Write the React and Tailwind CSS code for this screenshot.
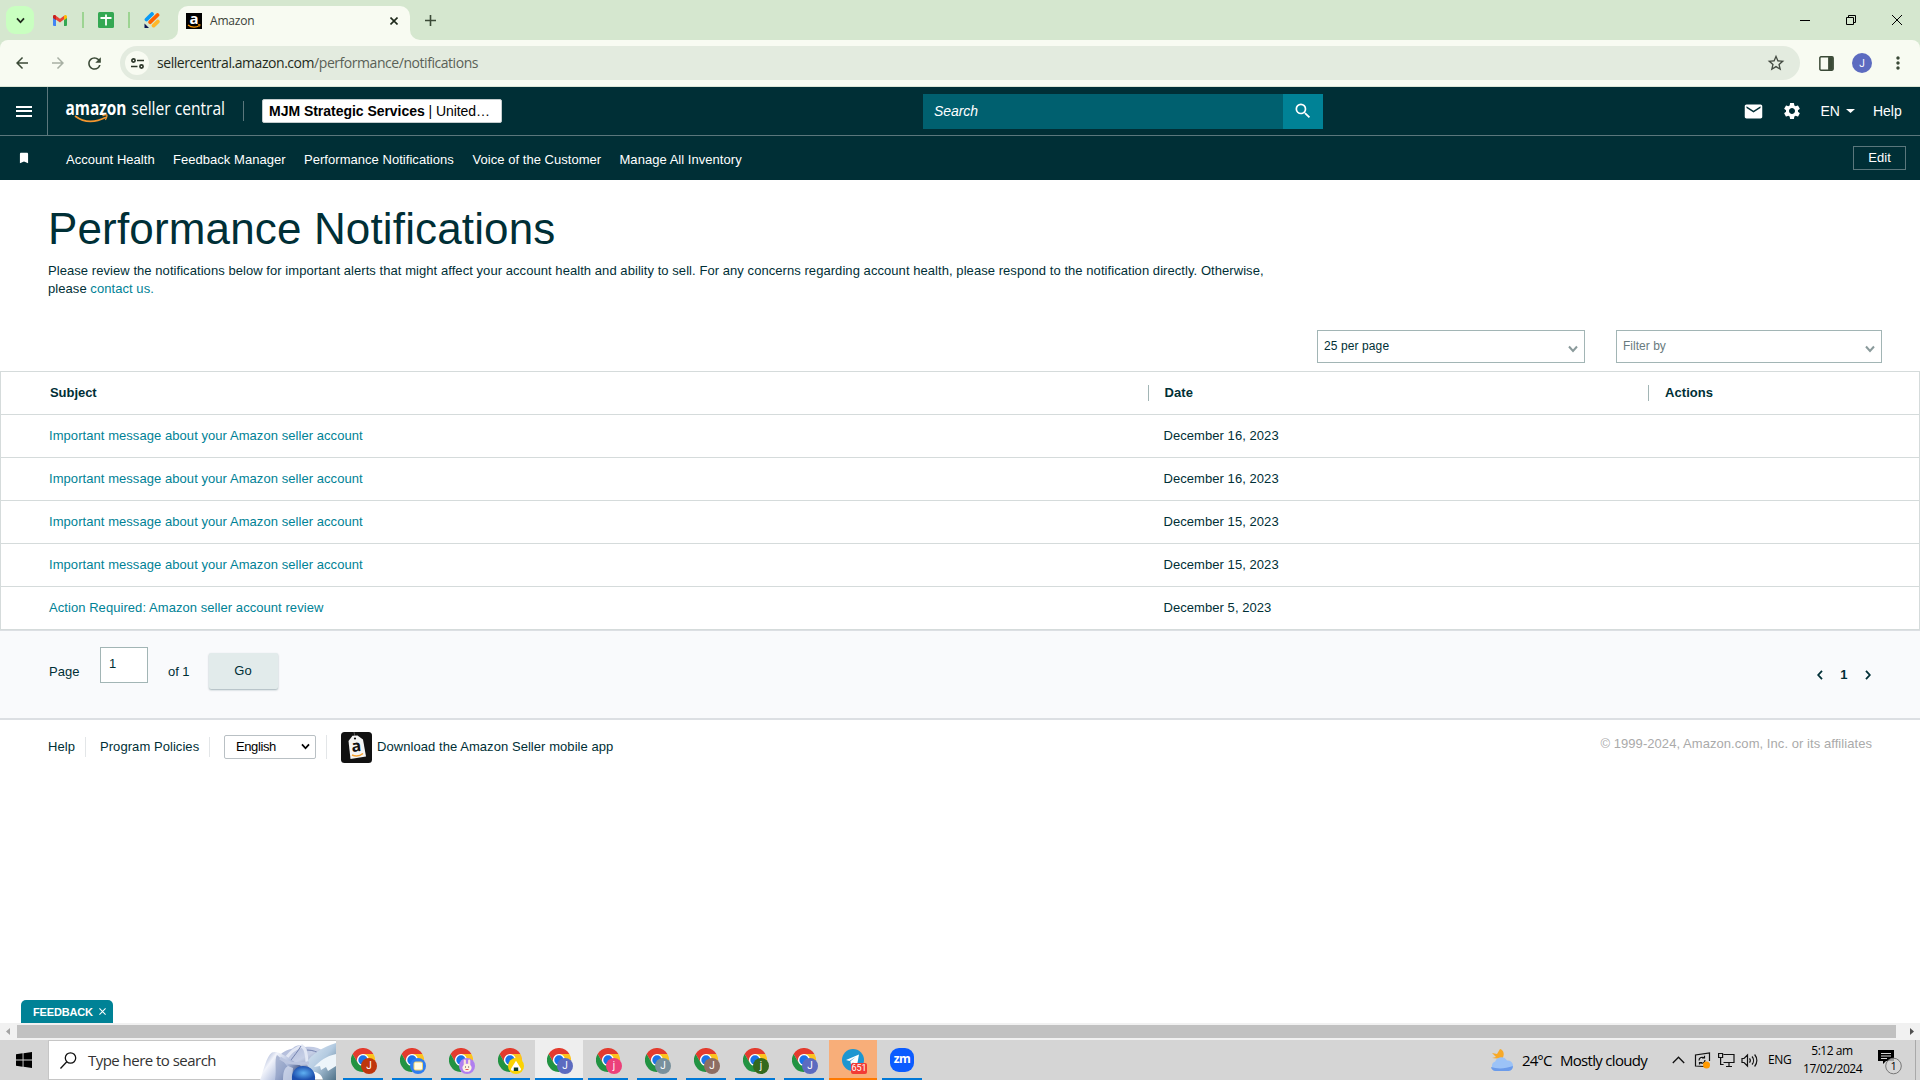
import { MdMail, MdSettings, MdBookmark, MdSearch, MdArrowBack, MdArrowForward, MdRefresh, MdStarOutline, MdMoreVert } from "react-icons/md";

const links = [
  { label: "Account Health", width: "w-[107px]" },
  { label: "Feedback Manager", width: "w-[131px]" },
  { label: "Performance Notifications", width: "w-[168.5px]" },
  { label: "Voice of the Customer", width: "w-[147px]" },
  { label: "Manage All Inventory", width: "w-[130px]" },
];

const rows = [
  { subject: "Important message about your Amazon seller account", date: "December 16, 2023" },
  { subject: "Important message about your Amazon seller account", date: "December 16, 2023" },
  { subject: "Important message about your Amazon seller account", date: "December 15, 2023" },
  { subject: "Important message about your Amazon seller account", date: "December 15, 2023" },
  { subject: "Action Required: Amazon seller account review", date: "December 5, 2023" },
];

const profiles = [
  { color: "#bf360c", letter: "J" },
  { color: "#2f7df0", art: "toast" },
  { color: "#b07ff0", art: "bunny" },
  { color: "#fbd303", art: "onigiri" },
  { color: "#5c6bc0", letter: "J", active: true },
  { color: "#ec407a", letter: "j" },
  { color: "#78909c", letter: "J" },
  { color: "#8d6e63", letter: "J" },
  { color: "#33691e", letter: "j" },
  { color: "#5c6bc0", letter: "J" },
];

function Chevron({ className }) {
  return (
    <svg className={className} viewBox="0 0 10 8" fill="none" stroke="currentColor" strokeWidth="2">
      <path d="M1 1.5 5 6l4-4.5" />
    </svg>
  );
}

function GmailIcon() {
  return (
    <svg className="w-[14px] h-[11px]" viewBox="0 0 14 11">
      <path d="M0 2h3v9H1a1 1 0 0 1-1-1z" fill="#4285f4" />
      <path d="M11 2h3v8a1 1 0 0 1-1 1h-2z" fill="#34a853" />
      <path d="M0 1.6C0 .2 1.5-.4 2.6.4L7 3.7 11.4.4V4.1L7 7.4 0 2.5z" fill="#ea4335" />
      <path d="M11 .7C12.2-.5 14 .1 14 1.7V3l-3 2.3z" fill="#fbbc04" />
      <path d="M0 1.7C0 .8.8.1 1.7.1L3 .7v4.4L0 3z" fill="#c5221f" />
    </svg>
  );
}

function AmazonFavicon() {
  return (
    <div className="relative w-4 h-4 bg-black">
      <span className="absolute left-0 -top-[3px] w-4 text-center text-[15px] leading-4 font-bold text-white">a</span>
      <svg className="absolute inset-0 w-4 h-4" viewBox="0 0 16 16" fill="none" stroke="#f90">
        <path d="M2 12c3.5 2.8 8.5 2.8 11.5.4" strokeWidth="1.2" />
        <path d="M12 11.6h2.2l-.6 2" strokeWidth=".8" />
      </svg>
    </div>
  );
}

function TabStrip() {
  return (
    <div className="h-10 shrink-0 flex bg-[#d5e7cf] text-[#1f2a1c]">
      <div className="w-[28px] h-[28px] ml-[6px] mt-[6px] rounded-[9px] bg-[#c9ffc0] flex items-center justify-center">
        <Chevron className="w-[9px] h-[7px]" />
      </div>
      <div className="h-10 ml-[19px] w-[115px] flex items-center">
        <GmailIcon />
        <i className="w-[2px] h-4 bg-[#9cd492] ml-[15px]" />
        <svg className="w-4 h-4 ml-[14px]" viewBox="0 0 16 16">
          <rect width="16" height="16" rx="1.5" fill="#34a853" />
          <path d="M2.5 6h11M8 2.5v11" stroke="#fff" strokeWidth="1.8" />
        </svg>
        <i className="w-[2px] h-4 bg-[#9cd492] ml-[14px]" />
        <svg className="w-4 h-4 ml-[14px] shrink-0" viewBox="0 0 16 16" strokeLinecap="round" strokeWidth="3.8">
          <path d="M2.5 7.5 8 2" stroke="#0a9bf5" />
          <path d="M6.2 10.2 13.5 3" stroke="#ff6100" />
          <path d="M9.6 13.6 13.8 9.6" stroke="#ffb629" />
          <path d="M.5 11.5 5 16H.5z" fill="#0a1551" />
        </svg>
      </div>
      <svg className="w-[10px] h-[10px] self-end" viewBox="0 0 10 10">
        <path d="M0 10A10 10 0 0 0 10 0V10z" fill="#f8fbf2" />
      </svg>
      <div className="w-[232px] h-[34px] mt-[6px] rounded-t-[10px] bg-[#f8fbf2] flex items-center pl-2 pr-[12px] pb-[5px]">
        <AmazonFavicon />
        <span className="ml-2 flex-1 text-[12px] tracking-[-0.2px] pt-[1px] text-[#3a3f38]">Amazon</span>
        <svg className="w-[8px] h-[8px]" viewBox="0 0 8 8" stroke="currentColor" strokeWidth="1.6">
          <path d="M.5.5l7 7M7.5.5l-7 7" />
        </svg>
      </div>
      <svg className="w-[10px] h-[10px] self-end" viewBox="0 0 10 10">
        <path d="M0 0A10 10 0 0 0 10 10H0z" fill="#f8fbf2" />
      </svg>
      <svg className="w-[11px] h-[11px] ml-[4.5px] mt-[15px]" viewBox="0 0 11 11" stroke="#3b4a37" strokeWidth="1.6">
        <path d="M5.5 0v11M0 5.5h11" />
      </svg>
      <div className="ml-auto flex items-center pr-[18px] text-black">
        <svg className="w-[10px] h-[10px] mr-9" viewBox="0 0 10 10" stroke="currentColor"><path d="M0 5.5h10" /></svg>
        <svg className="w-[10px] h-[10px] mr-9" viewBox="0 0 10 10" stroke="currentColor" fill="none">
          <path d="M.5 2.5h7v7h-7zM2.5 2.5v-2h7v7h-2" />
        </svg>
        <svg className="w-[10px] h-[10px]" viewBox="0 0 10 10" stroke="currentColor"><path d="M0 0l10 10M10 0L0 10" /></svg>
      </div>
    </div>
  );
}

function Toolbar() {
  return (
    <div className="bg-[#d5e7cf] shrink-0">
      <div className="h-[47px] bg-[#f8fbf2] border-b border-[#dbe5d5] rounded-t-[8px] flex items-center text-[#3b4a37]">
        <MdArrowBack className="w-[18px] h-[18px] ml-[13px]" />
        <MdArrowForward className="w-[18px] h-[18px] ml-[18px] text-[#a8b0a4]" />
        <MdRefresh className="w-[19px] h-[19px] ml-[18px]" />
        <div className="h-[34px] w-[1680px] ml-[16px] rounded-full bg-[#e3ebdf] flex items-center pl-[5px] pr-[14px]">
          <div className="w-6 h-6 rounded-full bg-[#f8fbf2] flex items-center justify-center">
            <svg className="w-[13px] h-[11px]" viewBox="0 0 13 11" fill="none" stroke="#2c3629" strokeWidth="1.7">
              <circle cx="2.5" cy="2.5" r="1.6" />
              <path d="M6 2.5h7M0 8.5h6.5" />
              <circle cx="10.5" cy="8.5" r="1.6" />
            </svg>
          </div>
          <span className="ml-2 flex-1 text-[14px] tracking-[-0.45px] text-[#5a6157] pb-px">
            <span className="text-[#1f2a1c]">sellercentral.amazon.com</span>/performance/notifications
          </span>
          <MdStarOutline className="w-5 h-5 text-[#444b42]" />
        </div>
        <svg className="w-[15px] h-[15px] ml-[19px]" viewBox="0 0 14 14">
          <rect x=".8" y=".8" width="12.4" height="12.4" rx="1" fill="none" stroke="currentColor" strokeWidth="1.4" />
          <path d="M8.5 1H13v12H8.5z" fill="currentColor" />
        </svg>
        <div className="w-5 h-5 rounded-full bg-[#5c6bc0] text-white text-[10px] ml-[18px] flex items-center justify-center font-[Roboto,sans-serif]">J</div>
        <MdMoreVert className="w-5 h-5 ml-[16px]" />
      </div>
    </div>
  );
}

function Logo() {
  return (
    <svg className="w-[166px] h-[34px] overflow-visible" viewBox="-1 -4 166 34" fontFamily="Open Sans, sans-serif" fill="#fff">
      <text x="-.5" y="16.5" fontSize="19" fontWeight="700" textLength="61" lengthAdjust="spacingAndGlyphs">amazon</text>
      <text x="65.5" y="16.5" fontSize="19" textLength="93.5" lengthAdjust="spacingAndGlyphs">seller central</text>
      <path d="M9 18c9 6.8 20 6.8 31 1.3" fill="none" stroke="#f3962f" strokeWidth="1.7" />
      <path d="M36.5 17.8c2-.9 3.5-1 4.500-.6.2 1.4-.4 3-1.6 4.6" fill="none" stroke="#f3962f" strokeWidth="1.3" />
    </svg>
  );
}

function SellerHeader() {
  return (
    <header className="bg-[#002f36] text-white shrink-0">
      <div className="h-[49px] border-b border-[#5b777c] flex items-center text-[14px]">
        <div className="w-12 h-full border-r border-[#5b777c] flex items-center pl-4">
          <div className="w-4 h-[11px] flex flex-col justify-between">
            <i className="h-[2px] bg-white" />
            <i className="h-[2px] bg-white" />
            <i className="h-[2px] bg-white" />
          </div>
        </div>
        <div className="ml-[17px]"><Logo /></div>
        <i className="w-px h-5 bg-[#5b777c] ml-[12px]" />
        <div className="w-[240px] h-6 ml-[18px] rounded-[2px] bg-white border border-[#c4cccd] text-black flex items-center pl-[6px] whitespace-pre">
          <b className="tracking-[-0.03px]">MJM Strategic Services</b>
          <span className="tracking-[-0.08px]"> | United…</span>
        </div>
        <div className="ml-[421px] w-[360px] h-[35px] bg-[#00606f] flex items-center pl-[11px] italic tracking-[-0.05px]">Search</div>
        <div className="w-10 h-[35px] bg-[#008296] flex items-center justify-center">
          <MdSearch className="w-5 h-5" />
        </div>
        <MdMail className="w-[21px] h-[21px] ml-[420px]" />
        <MdSettings className="w-[20px] h-[20px] ml-[18px]" />
        <span className="ml-[18.5px]">EN</span>
        <svg className="w-[9px] h-[4px] ml-[6px]" viewBox="0 0 9 4"><path d="M0 0h9L4.5 4z" fill="#fff" /></svg>
        <span className="ml-[18px]">Help</span>
      </div>
      <nav className="h-[44px] flex items-center text-[13px] tracking-[0.04px]">
        <MdBookmark className="w-[14px] h-[14px] ml-[17px] mr-[35px]" />
        {links.map(l => (
          <span key={l.label} className={"pt-[3px] whitespace-nowrap " + l.width}>{l.label}</span>
        ))}
        <button className="ml-auto mr-[14px] w-[53px] h-6 border border-[#5b777c] pb-[1px] text-[13px]">Edit</button>
      </nav>
    </header>
  );
}

function Notifications() {
  return (
    <main className="flex-1 flex flex-col bg-white text-[13px] text-[#002f36] tracking-[0.06px]">
      <h1 className="mt-[25px] ml-12 text-[44px] leading-[48px] tracking-[0.15px]">Performance Notifications</h1>
      <p className="mt-[9px] ml-12 leading-[18px] whitespace-nowrap">
        Please review the notifications below for important alerts that might affect your account health and ability to sell. For any concerns regarding account health, please respond to the notification directly. Otherwise,
        <br />
        please <span className="text-[#008296]">contact us.</span>
      </p>

      <div className="mt-[32px] ml-[1317px] flex text-[12px] tracking-[0.1px]">
        <div className="w-[268px] h-[33px] border border-[#a2b5b5] flex items-center pl-[6px] pr-[6px] justify-between">
          <span className="pb-px">25 per page</span>
          <Chevron className="w-[10px] h-[8px] mt-[4px] text-[#8a9a9b]" />
        </div>
        <div className="w-[266px] h-[33px] ml-[31px] border border-[#a2b5b5] flex items-center pl-[6px] pr-[6px] justify-between">
          <span className="pb-px text-[#687b7e] tracking-[0.02px]">Filter by</span>
          <Chevron className="w-[10px] h-[8px] mt-[4px] text-[#8a9a9b]" />
        </div>
      </div>

      <div className="mt-[8px] border-x border-t border-[#d5dbdb]">
        <div className="h-[43px] border-b border-[#d5dbdb] flex items-center font-bold">
          <span className="w-[1147px] pl-[49px] tracking-[-0.05px]">Subject</span>
          <span className="w-[500px] h-4 leading-4 border-l border-[#a2b5b5] pl-[15.5px]">Date</span>
          <span className="h-4 leading-4 border-l border-[#a2b5b5] pl-[16px]">Actions</span>
        </div>
        {rows.map((r, i) => (
          <div key={i} className="h-[43px] border-b border-[#d5dbdb] flex items-center">
            <span className="w-[1162.5px] pl-[48px] text-[#008296]">{r.subject}</span>
            <span>{r.date}</span>
          </div>
        ))}
      </div>

      <div className="h-[90px] shrink-0 border-b-2 border-t border-[#dcdfe3] bg-[#f9fafc] flex items-start leading-[18px]">
        <span className="ml-[49px] w-[51px] mt-[32px]">Page</span>
        <div className="w-12 h-9 mt-[16px] border border-[#a2b5b5] bg-white pl-2 pt-[7px]">1</div>
        <span className="ml-5 w-[40.5px] mt-[32px] whitespace-nowrap tracking-[-0.05px]">of 1</span>
        <button className="w-[69px] h-[36px] mt-[22px] rounded-[2px] bg-[#e2ebeb] shadow-[0_1px_2px_rgba(0,47,54,0.35)]">Go</button>
        <div className="ml-auto mr-[49px] mt-[39px] flex items-center">
          <svg className="w-[6px] h-[10px]" viewBox="0 0 6 10" fill="none" stroke="currentColor" strokeWidth="1.8"><path d="M5 .8 1.2 5 5 9.2" /></svg>
          <b className="w-[42px] text-center leading-[10px]">1</b>
          <svg className="w-[6px] h-[10px]" viewBox="0 0 6 10" fill="none" stroke="currentColor" strokeWidth="1.8"><path d="M1 .8 4.8 5 1 9.2" /></svg>
        </div>
      </div>

      <footer className="h-[54px] flex items-center">
        <span className="ml-12 w-[37px]">Help</span>
        <i className="w-px h-5 bg-[#e3e6e8]" />
        <span className="ml-[14px] w-[109px]">Program Policies</span>
        <i className="w-px h-5 bg-[#e3e6e8]" />
        <div className="ml-[14px] w-[92px] h-6 mb-px rounded-[2px] border border-[#b9c0c4] text-black flex items-center justify-between pl-[11px] pr-[5px]">
          <span className="tracking-[-0.4px]">English</span>
          <Chevron className="w-[9px] h-[7px]" />
        </div>
        <i className="w-px h-6 bg-[#e3e6e8] ml-[10px]" />
        <svg className="w-[31px] h-[31px] ml-[14px] mt-px" viewBox="0 0 31 31">
          <rect width="31" height="31" rx="3.5" fill="#111" />
          <path d="M13 0l1 5" stroke="#555" />
          <path d="M7.5 9 11.5 3.8l5-.4L22 7.5l3 17L9.5 27z" fill="#f4f4f4" />
          <circle cx="14" cy="6.5" r="1.1" fill="#111" />
          <text x="10.5" y="19.5" fontSize="16" fontWeight="700" fontFamily="Open Sans, sans-serif" fill="#111" transform="rotate(-6 15 16)">a</text>
          <path d="M11 23c3.5 1.5 8 1 11-1.5" fill="none" stroke="#f5a030" strokeWidth="1.5" />
        </svg>
        <span className="ml-[5px]">Download the Amazon Seller mobile app</span>
        <span className="ml-auto mr-12 mb-[7px] text-[#aaa]">© 1999-2024, Amazon.com, Inc. or its affiliates</span>
      </footer>

      <div className="mt-auto ml-[21px] w-[92px] h-[23px] rounded-t-[5px] bg-[#008296] text-white text-[11px] font-bold flex items-center pl-3">
        <span className="w-[66px] tracking-[-0.15px] pt-px">FEEDBACK</span>
        <svg className="w-[7px] h-[7px]" viewBox="0 0 8 8" stroke="#fff" strokeWidth="1.2"><path d="M.5.5l7 7M7.5.5l-7 7" /></svg>
      </div>
    </main>
  );
}

function Scrollbar() {
  return (
    <div className="h-[17px] shrink-0 bg-[#f1f1f1] flex items-center">
      <svg className="w-[17px] h-[17px]" viewBox="0 0 17 17"><path d="M10 5v7L6 8.5z" fill="#a3a3a3" /></svg>
      <div className="flex-1 h-[13px] bg-[#c1c1c1]" />
      <svg className="w-[24px] h-[17px]" viewBox="0 0 24 17"><path d="M14 5v7l4-3.5z" fill="#505050" /></svg>
    </div>
  );
}

function ChromeIcon() {
  return (
    <svg className="w-6 h-6" viewBox="0 0 24 24">
      <circle cx="12" cy="12" r="6.2" fill="#fff" />
      <path d="M1.6 6A12 12 0 0 1 22.4 6H12A6 6 0 0 0 6.8 15z" fill="#e33b2e" />
      <path d="M1.6 6A12 12 0 0 1 22.4 6H12A6 6 0 0 0 6.8 15z" fill="#fcc31e" transform="rotate(120 12 12)" />
      <path d="M1.6 6A12 12 0 0 1 22.4 6H12A6 6 0 0 0 6.8 15z" fill="#229342" transform="rotate(240 12 12)" />
      <circle cx="12" cy="12" r="4.7" fill="#1a73e8" />
    </svg>
  );
}

function BadgeArt({ art }) {
  if (art === "toast") {
    return <svg className="w-4 h-4" viewBox="0 0 16 16"><rect x="4" y="4" width="8.5" height="8" rx="1.5" fill="#fffbe6" stroke="#f6d365" /></svg>;
  }
  if (art === "bunny") {
    return (
      <svg className="w-4 h-4" viewBox="0 0 16 16">
        <path d="M5.8 7V2.5M10.2 7V2.5" stroke="#fbe3d6" strokeWidth="2.2" strokeLinecap="round" />
        <ellipse cx="8" cy="9.8" rx="4.6" ry="4" fill="#fdf3e3" />
        <path d="M6 9h.9M9.2 9h.9" stroke="#333" />
        <path d="M6.5 11.5h3" stroke="#e8554e" />
      </svg>
    );
  }
  return (
    <svg className="w-4 h-4" viewBox="0 0 16 16">
      <path d="M8 2.8 12.8 10.6a1.4 1.4 0 0 1-1.2 2.200H4.400a1.4 1.4 0 0 1-1.200-2.200z" fill="#fff" />
      <path d="M5.8 9.5h4.4V13H5.8z" fill="#0c3b2a" />
    </svg>
  );
}

// flower with ice petals at the right end of the search box
function SearchArt() {
  return (
    <svg className="w-[76px] h-[39px]" viewBox="0 0 76 39">
      <defs>
        <linearGradient id="back" x1="0" y1="0" x2="1" y2="1">
          <stop offset="0" stopColor="#aab4d6" />
          <stop offset=".5" stopColor="#c6cfe6" />
          <stop offset="1" stopColor="#52658f" />
        </linearGradient>
        <linearGradient id="side" x1="0" y1="0" x2="1" y2=".5">
          <stop offset="0" stopColor="#7488ba" />
          <stop offset=".35" stopColor="#f2f4fb" />
          <stop offset=".7" stopColor="#b3c0de" />
          <stop offset="1" stopColor="#4e6190" />
        </linearGradient>
        <linearGradient id="ice" x1="0" y1="0" x2="1" y2="1">
          <stop offset="0" stopColor="#dfe9f5" />
          <stop offset=".5" stopColor="#b4cbe1" />
          <stop offset="1" stopColor="#4f7288" />
        </linearGradient>
        <radialGradient id="core">
          <stop offset="0" stopColor="#5fb0f2" />
          <stop offset="1" stopColor="#1d4fae" />
        </radialGradient>
      </defs>
      <path d="M20 14C26 8 30 9 33 7c4-4 9-3 12-1 7-1 14 0 20 5L54 30H28z" fill="url(#back)" />
      <path d="M27 16C33 8 39 6 42 5c4 3 5 9 5 18" fill="none" stroke="#e2e7f4" strokeWidth="3" />
      <path d="M41 5c-3 5-7 10-10 14M47 9c6 0 10 2 13 4" fill="none" stroke="#7281ae" strokeWidth="1" />
      <path d="M0 39C4 29 6 16 12 11.5c6-3 17 6 29 13.500L32 39z" fill="url(#side)" />
      <path d="M15 39C17 29 14 19 17 14c7 6 13 13 16 25z" fill="#8494bd" opacity=".6" />
      <path d="M23 39c0-7 1-12 5-14l5 2-1 12z" fill="#dbe3f3" opacity=".7" />
      <path d="M76 2C62 6 51 14 46 22l5 8c6 1 11 3 12 9h13z" fill="url(#ice)" />
      <path d="M32 39c-1-8 4-14 11-14 8 0 13 6 12 14z" fill="url(#core)" />
      <path d="M76 13C66 15 60 20 54 26l6-1 1 4 5-3 2 4 8-5z" fill="#eef5fa" />
      <path d="M20 17c8 6 17 6 29 5" fill="none" stroke="#bcc6e0" strokeWidth="3" />
    </svg>
  );
}

function Taskbar() {
  return (
    <div className="h-10 shrink-0 bg-[#d5d5d5] flex items-center text-black">
      <svg className="w-4 h-4 ml-4" viewBox="0 0 16 16">
        <path d="M0 2.2 6.6 1.3V7.5H0zM7.5 1.2 16 0v7.5H7.5zM0 8.5h6.6v6.2L0 13.8zM7.5 8.5H16V16l-8.5-1.2z" />
      </svg>
      <div className="ml-4 w-[288px] h-10 border-y border-l border-[#c6c6c6] bg-white flex items-center pl-[11px]">
        <svg className="w-[17px] h-[17px]" viewBox="0 0 17 17" fill="none" stroke="#111" strokeWidth="1.3">
          <circle cx="10.5" cy="6" r="5.2" />
          <path d="M6.8 9.8.5 16.5" />
        </svg>
        <span className="ml-[11px] w-[172px] text-[15px] tracking-[-0.53px] text-[#333] whitespace-nowrap">Type here to search</span>
        <SearchArt />
      </div>
      <div className="flex ml-[3px] gap-px">
        {profiles.map((p, i) => (
          <div key={i} className={"relative w-12 h-10 flex justify-center pt-2 " + (p.active ? "bg-[#eeeeee]" : "")}>
            <ChromeIcon />
            <div className="absolute left-[22px] top-[18px] w-4 h-4 rounded-full flex items-center justify-center text-white text-[10px] leading-none font-[Roboto,sans-serif]" style={{ background: p.color }}>
              {p.art ? <BadgeArt art={p.art} /> : p.letter}
            </div>
            <i className={"absolute bottom-0 h-[2px] bg-[#0078d7] " + (p.active ? "inset-x-0" : "inset-x-1")} />
          </div>
        ))}
        <div className="relative w-12 h-10 bg-[#f8ae79] flex justify-center pt-[9px] border-b-2 border-[#ff7a00]">
          <svg className="w-[22px] h-[22px]" viewBox="0 0 22 22">
            <circle cx="11" cy="11" r="11" fill="#1e96d0" />
            <path d="M4 11 17 5.5 15 16.5l-4-3-2 2.3-.6-3.6L14 7.8 7.5 12z" fill="#fff" />
          </svg>
          <span className="absolute left-[22px] top-[23px] w-4 h-[11px] rounded-[2px] bg-[#f23c34] text-white text-[9px] leading-[11px] text-center font-[Roboto,sans-serif]">651</span>
        </div>
        <div className="relative w-12 h-10 flex justify-center pt-2">
          <div className="w-6 h-6 rounded-[9px] bg-[#0b5cff] text-white font-bold text-[12px] leading-[21px] text-center tracking-[-0.6px]">zm</div>
          <i className="absolute bottom-0 inset-x-1 h-[2px] bg-[#0078d7]" />
        </div>
      </div>

      <svg className="w-6 h-6 ml-auto" viewBox="0 0 24 24">
        <path d="M10 1c4 1 5 6 2 10L2 10l4-1-4-4 5 1z" fill="#f7a928" />
        <path d="M5.5 23a5 5 0 0 1-.3-9.5A6.5 6.5 0 0 1 17 12.5a5.3 5.3 0 0 1 1.5 10.5z" fill="#9cc3f7" />
        <path d="M5.5 23a5 5 0 0 1-4.5-4c6 2 14 2 22-1a5.3 5.3 0 0 1-4.5 5z" fill="#6b9bea" />
      </svg>
      <span className="ml-[8px] w-[38px] text-[15px] tracking-[-0.9px] whitespace-nowrap">24°C</span>
      <span className="w-[112px] text-[15px] tracking-[-0.7px] whitespace-nowrap">Mostly cloudy</span>
      <svg className="w-[13px] h-[8px]" viewBox="0 0 13 8" fill="none" stroke="#111" strokeWidth="1.3"><path d="M.8 7 6.5 1.2 12.2 7" /></svg>
      <svg className="w-[17px] h-[17px] ml-[9px]" viewBox="0 0 17 17" fill="none" stroke="#111" strokeWidth="1.2">
        <path d="M10 14.5 1.5 14V3L15.5 1v8" />
        <path d="M5 8.5C5 5.5 8 4.5 10.5 6M10.5 3.8V6H8M11 8c0 3-3 4-5.5 2.5M5.500 12.5v-2H8" />
        <circle cx="12.5" cy="13" r="3.5" fill="#f90" stroke="none" />
      </svg>
      <svg className="w-[17px] h-[16px] ml-[7px]" viewBox="0 0 17 16" fill="none" stroke="#111" strokeWidth="1.2">
        <path d="M5.5 2.5H16v8H5.5M8 14.5h6M11 10.5v4M.6 1.5h4v4h-4zM2.6 5.5v7h3" />
      </svg>
      <svg className="w-[18px] h-[15px] ml-[6px]" viewBox="0 0 18 15" fill="none" stroke="#111" strokeWidth="1.2">
        <path d="M1 5.5h2L6.5 2v11L3 9.5H1zM8.5 5.3c1 1.3 1 3.1 0 4.4M11 3.5c2 2.3 2 5.7 0 8M13.6 1.5c3 3.5 3 8.5 0 12" />
      </svg>
      <span className="ml-[9px] w-[35px] text-[12px] tracking-[-0.4px]">ENG</span>
      <div className="w-[58px] text-center text-[12px] leading-[18px] tracking-[-0.45px] whitespace-nowrap">
        <div>5:12 am</div>
        <div>17/02/2024</div>
      </div>
      <svg className="w-[25px] h-[28px] mt-1 ml-[16px]" viewBox="0 0 25 28">
        <path d="M1 2h16v11H9l-3 3v-3H1z" fill="#000" />
        <path d="M4 5.5h10M4 8h10M4 10.5h6" stroke="#d5d5d5" />
        <circle cx="16.5" cy="18" r="7.8" fill="#d5d5d5" fillOpacity=".75" stroke="#777" />
        <text x="13.6" y="22" fontSize="11" fontFamily="Open Sans, sans-serif">1</text>
      </svg>
      <i className="w-px h-10 bg-[#a9a9a9] ml-[13px] mr-1" />
    </div>
  );
}

export default function App() {
  return (
    <div className="w-[1920px] h-[1080px] flex flex-col overflow-hidden font-['Open_Sans',sans-serif]">
      <TabStrip />
      <Toolbar />
      <div className="flex-1 flex flex-col font-['Liberation_Sans',sans-serif]">
        <SellerHeader />
        <Notifications />
      </div>
      <Scrollbar />
      <Taskbar />
    </div>
  );
}
